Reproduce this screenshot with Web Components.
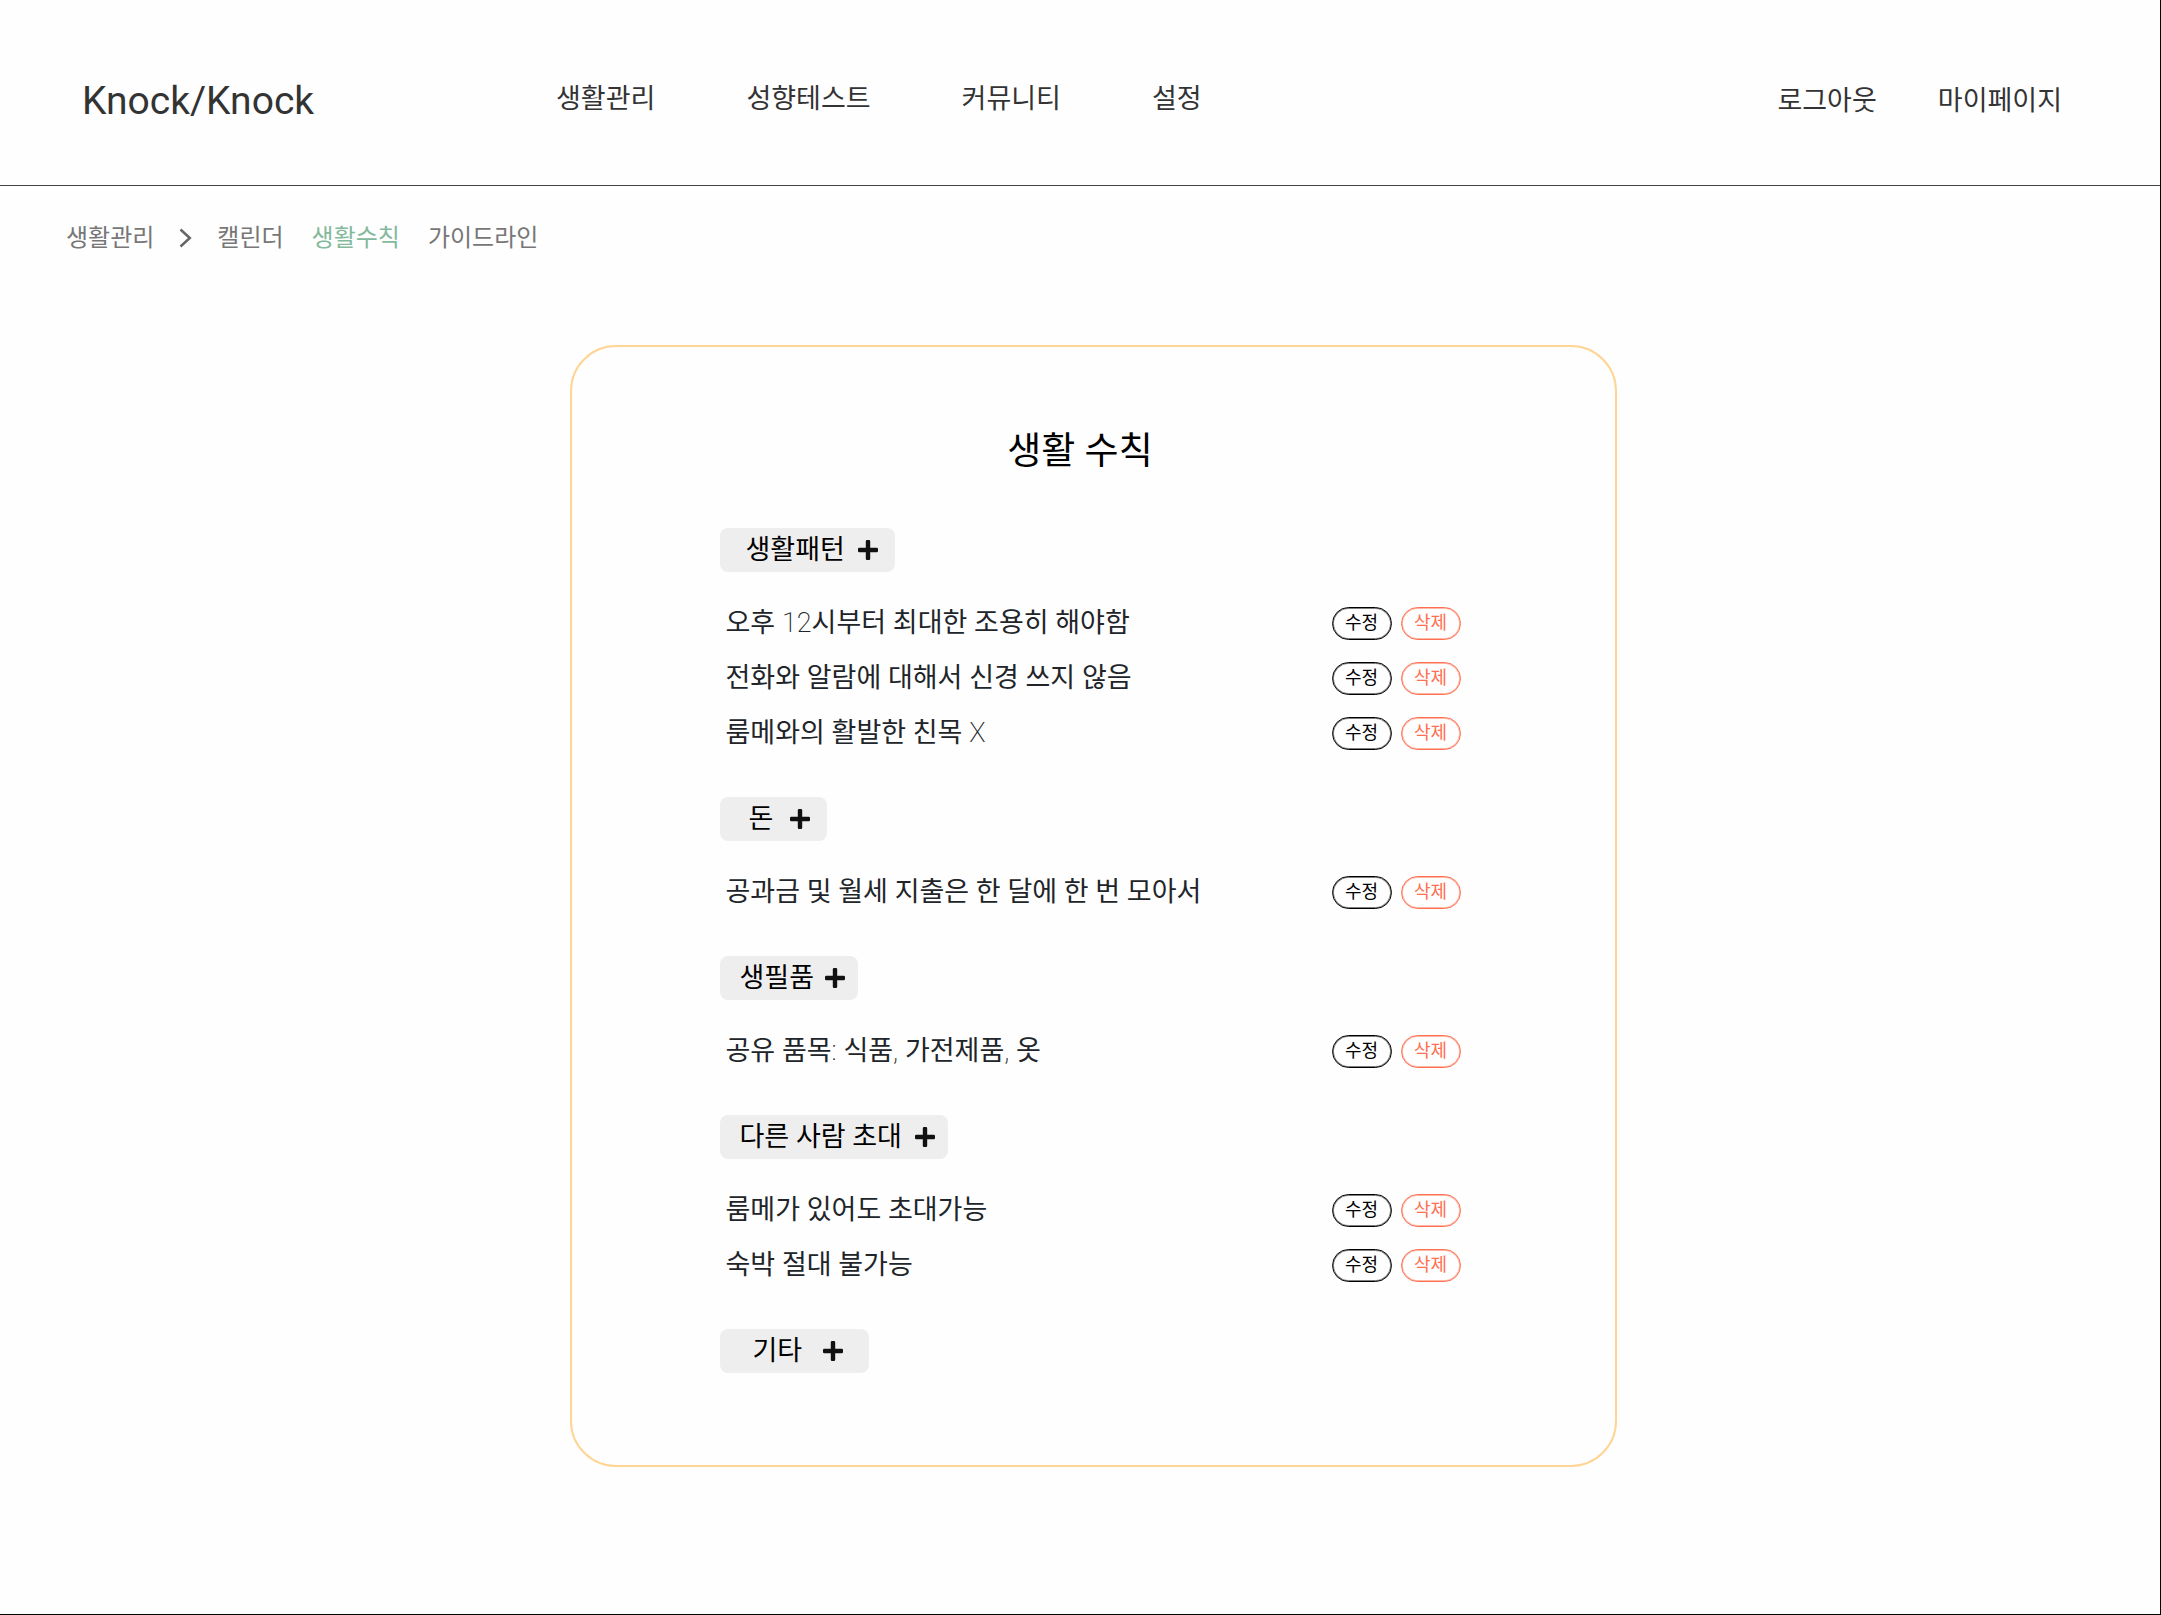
<!DOCTYPE html>
<html lang="ko">
<head>
<meta charset="utf-8">
<meta name="viewport" content="width=device-width, initial-scale=1">
<title>Knock/Knock</title>
<style>
  html, body { margin: 0; }
  body {
    font-family: Roboto, "Noto Sans CJK KR", sans-serif;
    font-size: 27px;
    line-height: 40px;
    color: #212529;
    background: #fefefe;
  }
</style>
</head>
<body>
<knock-app></knock-app>

<template id="t-app">
  <style>
    :host { display: flex; flex-direction: column; box-sizing: border-box; min-height: 100vh; border-right: 1px solid #000; border-bottom: 1px solid #000; }
    main { display: flex; justify-content: center; padding: 82px 0 146px 26px; }
    rule-group + rule-group { margin-top: 44px; }
    .thin { font-weight: 200; }
  </style>
  <site-header></site-header>
  <sub-nav></sub-nav>
  <main>
    <rules-card heading="생활 수칙">
      <rule-group label="생활패턴" style="--start:26px;--gap:13px;--end:17px">
        <rule-item>오후 <span class="thin">12</span>시부터 최대한 조용히 해야함</rule-item>
        <rule-item>전화와 알람에 대해서 신경 쓰지 않음</rule-item>
        <rule-item>룸메와의 활발한 친목 <span class="thin">X</span></rule-item>
      </rule-group>
      <rule-group label="돈" style="--start:29px;--gap:17px;--end:17px">
        <rule-item>공과금 및 월세 지출은 한 달에 한 번 모아서</rule-item>
      </rule-group>
      <rule-group label="생필품" style="--start:20px;--gap:11px;--end:13px">
        <rule-item>공유 품목<span class="thin">:</span> 식품<span class="thin">,</span> 가전제품<span class="thin">,</span> 옷</rule-item>
      </rule-group>
      <rule-group label="다른 사람 초대" style="--start:20px;--gap:13px;--end:13px">
        <rule-item>룸메가 있어도 초대가능</rule-item>
        <rule-item>숙박 절대 불가능</rule-item>
      </rule-group>
      <rule-group label="기타" style="--start:33px;--gap:21px;--end:26px"></rule-group>
    </rules-card>
  </main>
</template>

<template id="t-header">
  <style>
    :host { display: block; border-bottom: 1px solid #444; }
    header { display: flex; align-items: flex-start; height: 185px; padding: 79px 98px 0 82px; box-sizing: border-box; color: #333; }
    a { color: inherit; text-decoration: none; white-space: nowrap; }
    .logo { flex: 0 0 474px; font-size: 39px; line-height: 44px; }
    nav { display: flex; gap: 91px; }
    .account { margin-left: auto; gap: 61px; line-height: 44px; }
  </style>
  <header>
    <a class="logo" href="#">Knock/Knock</a>
    <nav aria-label="주 메뉴">
      <a href="#">생활관리</a><a href="#">성향테스트</a><a href="#">커뮤니티</a><a href="#">설정</a>
    </nav>
    <nav class="account" aria-label="계정">
      <a href="#">로그아웃</a><a href="#">마이페이지</a>
    </nav>
  </header>
</template>

<template id="t-subnav">
  <style>
    :host { display: block; font-size: 24px; line-height: 36px; color: #777; }
    nav { display: flex; align-items: center; gap: 28px; padding: 34px 66px 7px; }
    a { color: inherit; text-decoration: none; white-space: nowrap; }
    .root { display: flex; align-items: center; gap: 25px; margin-right: -4px; }
    svg { display: block; }
    [aria-current] { color: #84b99b; }
  </style>
  <nav aria-label="생활관리 메뉴">
    <span class="root"><a href="#">생활관리</a>
      <svg width="14" height="20" viewBox="0 0 14 20" fill="none" stroke="#666" stroke-width="2.500" aria-hidden="true"><path d="M1.500 1.500 10.800 10 1.500 18.500"/></svg></span>
    <a href="#">캘린더</a><a href="#" aria-current="page">생활수칙</a><a href="#">가이드라인</a>
  </nav>
</template>

<template id="t-card">
  <style>
    :host { display: block; box-sizing: border-box; width: 100%; max-width: 1047px; padding: 78px 154px 92px 148px; border: 2px solid #ffd596; border-radius: 46px; }
    h1 { margin: 0 20px 49px 0; font-size: 37px; line-height: 54px; font-weight: 400; text-align: center; color: #000; }
  </style>
  <h1></h1>
  <slot></slot>
</template>

<template id="t-group">
  <style>
    :host { display: block; }
    button { display: inline-flex; align-items: center; gap: var(--gap); height: 44px; padding: 0 var(--end) 0 var(--start); border: 0; border-radius: 8px; background: #eee; color: #000; font: inherit; white-space: nowrap; vertical-align: top; }
    .items { display: flex; flex-direction: column; gap: 15px; padding-top: 31px; }
    :host(:empty) .items { display: none; }
    h2 { margin: 0; font: inherit; height: 44px; }
    svg { display: block; }
  </style>
  <h2><button type="button"><span></span><svg width="20" height="20" viewBox="0 0 20 20" fill="#111" aria-hidden="true"><path d="M9 0h2q1.200 0 1.200 1.200V7.800h6.600q1.200 0 1.200 1.200v2q0 1.200-1.200 1.200h-6.600v6.600q0 1.200-1.200 1.200H9q-1.200 0-1.200-1.200v-6.600H1.200Q0 12.200 0 11V9q0-1.200 1.200-1.200h6.600V1.200Q7.800 0 9 0z"/></svg></button></h2>
  <div class="items"><slot></slot></div>
</template>

<template id="t-item">
  <style>
    :host { display: flex; align-items: center; gap: 9px; padding-left: 6px; }
    span { flex: 1; }
    button { box-sizing: border-box; width: 60px; height: 33px; padding: 0; border: 1px solid currentColor; border-radius: 17px; box-shadow: inset 0 0 0 1px color-mix(in srgb, currentColor 50%, transparent); background: transparent; color: #000; font: inherit; font-size: 18px; line-height: 26px; }
    .delete { color: #ff6f50; }
  </style>
  <span><slot></slot></span>
  <button type="button">수정</button>
  <button type="button" class="delete">삭제</button>
</template>

<script>
  class Base extends HTMLElement {
    constructor() {
      super();
      const tpl = document.getElementById(this.constructor.template);
      this.attachShadow({ mode: 'open' }).append(tpl.content.cloneNode(true));
    }
  }
  class SiteHeader extends Base { static template = 't-header'; }
  class SubNav extends Base { static template = 't-subnav'; }
  class RulesCard extends Base {
    static template = 't-card';
    connectedCallback() { this.shadowRoot.querySelector('h1').textContent = this.getAttribute('heading'); }
  }
  class RuleGroup extends Base {
    static template = 't-group';
    connectedCallback() { this.shadowRoot.querySelector('button span').textContent = this.getAttribute('label'); }
  }
  class RuleItem extends Base { static template = 't-item'; }
  class KnockApp extends Base { static template = 't-app'; }
  customElements.define('site-header', SiteHeader);
  customElements.define('sub-nav', SubNav);
  customElements.define('rules-card', RulesCard);
  customElements.define('rule-group', RuleGroup);
  customElements.define('rule-item', RuleItem);
  customElements.define('knock-app', KnockApp);
</script>
</body>
</html>
